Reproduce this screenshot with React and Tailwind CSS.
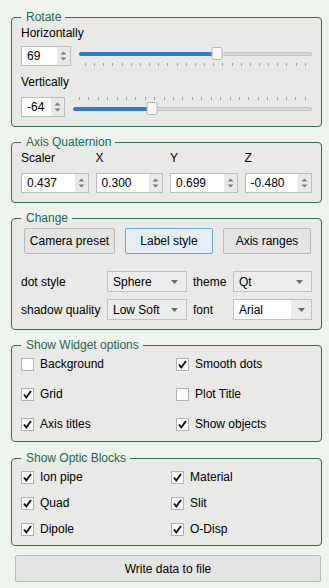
import React from 'react';

const Group = ({ title, className = '', children }) => (
  <fieldset
    className={`m-0 min-w-0 rounded-[4px] border border-[#376f4a] bg-[#e9eae7] px-[9px] ${className}`}
  >
    <legend className="pl-[5px] pr-[4px] text-[12px] leading-[14px] text-[#226a55]">{title}</legend>
    {children}
  </fieldset>
);

const Arrows = () => (
  <svg width="7" height="10" viewBox="0 0 7 10">
    <path d="M0.5 3.5 L3.5 0.5 L6.5 3.5 Z" fill="#7a7a7a" />
    <path d="M0.5 6.5 L3.5 9.5 L6.5 6.5 Z" fill="#7a7a7a" />
  </svg>
);

const SpinBox = ({ value, className = '' }) => (
  <div className={`flex h-[20px] border border-[#bcbcbc] bg-white ${className}`}>
    <div className="flex flex-1 items-center pl-[5px] leading-none">{value}</div>
    <div className="flex w-[13px] items-center justify-center bg-[#e9e9e9]">
      <Arrows />
    </div>
  </div>
);

const DownArrow = () => (
  <svg width="7" height="4" viewBox="0 0 7 4">
    <path d="M0 0 L7 0 L3.5 4 Z" fill="#6a6a6a" />
  </svg>
);

const Combo = ({ value, editable }) =>
  editable ? (
    <div className="flex h-[21px] border border-[#c2c2c2] bg-white">
      <div className="flex flex-1 items-center pl-[5px]">{value}</div>
      <div className="flex w-[20px] items-center justify-center bg-[#ebebeb]">
        <DownArrow />
      </div>
    </div>
  ) : (
    <div className="flex h-[21px] items-center justify-between border border-[#c2c2c2] bg-[#ececec] pl-[5px] pr-[8px]">
      <span>{value}</span>
      <DownArrow />
    </div>
  );

const Ticks = ({ className = '' }) => (
  <div className={`flex justify-between px-[6px] ${className}`}>
    {Array.from({ length: 25 }).map((_, i) => (
      <span key={i} className="h-[3px] w-px bg-[#a3a3a3]" />
    ))}
  </div>
);

const Slider = ({ pct, ticksBelow, className = '' }) => (
  <div className={`flex flex-1 flex-col ${className}`}>
    {!ticksBelow && <Ticks />}
    <div className={`relative h-[14px] ${ticksBelow ? '' : 'mt-[2px]'}`}>
      <div className="absolute left-0 right-0 top-[5px] h-[4px] rounded-[2px] border border-[#c4c4c4] bg-[#d8d8d8]" />
      <div
        className="absolute left-0 top-[5px] h-[4px] rounded-l-[2px] bg-[#2e7ad2]"
        style={{ width: `${pct}%` }}
      />
      <div
        className="absolute top-0 h-[13px] w-[11px] -translate-x-1/2 rounded-[2px] border border-[#b5b5b5] bg-[#f7f7f7]"
        style={{ left: `${pct}%` }}
      />
    </div>
    {ticksBelow && <Ticks className="mt-[2px]" />}
  </div>
);

const Check = ({ checked, label }) => (
  <div className="flex h-[14px] items-center">
    <div className="flex h-[13px] w-[13px] items-center justify-center border border-[#b3b3b3] bg-white">
      {checked && (
        <svg width="11" height="11" viewBox="0 0 11 11">
          <path d="M2 5.5 L4.3 8.5 L9 2" fill="none" stroke="#111" strokeWidth="1.9" />
        </svg>
      )}
    </div>
    <span className="ml-[6px]">{label}</span>
  </div>
);

const Button = ({ children, active, className = '' }) => (
  <button
    className={`h-[26px] rounded-[2px] border text-[12px] ${
      active ? 'border-[#6aa6e0] bg-[#e3eef9]' : 'border-[#b9b9b9] bg-[#e4e4e4]'
    } ${className}`}
  >
    {children}
  </button>
);

export default function App() {
  return (
    <div className="h-[588px] w-[329px] bg-[#eff3ed] pl-[11px] pr-[7px] pt-[10px] font-['Liberation_Sans',Arial,sans-serif] text-[12px] leading-[14px] text-black">
      <Group title="Rotate" className="pt-[2px] pb-[9px]">
        <div>Horizontally</div>
        <div className="mt-[6px] flex h-[20px] items-start">
          <SpinBox value="69" className="w-[50px]" />
          <Slider pct={59.2} ticksBelow className="ml-[8px] mt-[1px]" />
        </div>
        <div className="mt-[9px]">Vertically</div>
        <div className="mt-[8px] flex h-[20px] items-start">
          <SpinBox value="-64" className="w-[44px]" />
          <Slider pct={33} className="ml-[8px]" />
        </div>
      </Group>

      <Group title="Axis Quaternion" className="mt-[8px] pt-[2px] pb-[9px]">
        <div className="grid grid-cols-4 gap-x-[7px]">
          <div>Scaler</div>
          <div>X</div>
          <div>Y</div>
          <div>Z</div>
        </div>
        <div className="mt-[8px] grid grid-cols-4 gap-x-[7px]">
          <SpinBox value="0.437" />
          <SpinBox value="0.300" />
          <SpinBox value="0.699" />
          <SpinBox value="-0.480" />
        </div>
      </Group>

      <Group title="Change" className="mt-[8px] pt-[3px] pb-[9px]">
        <div className="flex gap-[10px] pl-[3px]">
          <Button className="w-[91px]">Camera preset</Button>
          <Button active className="w-[88px]">Label style</Button>
          <Button className="w-[88px]">Axis ranges</Button>
        </div>
        <div className="mt-[17px] flex items-center">
          <span className="w-[86px]">dot style</span>
          <div className="w-[80px]">
            <Combo value="Sphere" />
          </div>
          <span className="ml-[6px] w-[40px]">theme</span>
          <div className="w-[79px]">
            <Combo value="Qt" />
          </div>
        </div>
        <div className="mt-[7px] flex items-center">
          <span className="w-[86px]">shadow quality</span>
          <div className="w-[80px]">
            <Combo value="Low Soft" />
          </div>
          <span className="ml-[6px] w-[40px]">font</span>
          <div className="w-[79px]">
            <Combo value="Arial" editable />
          </div>
        </div>
      </Group>

      <Group title="Show Widget options" className="mt-[8px] pt-[5px] pb-[10px]">
        <div className="grid grid-cols-[155px_1fr] gap-y-[16px]">
          <Check label="Background" />
          <Check checked label="Smooth dots" />
          <Check checked label="Grid" />
          <Check label="Plot Title" />
          <Check checked label="Axis titles" />
          <Check checked label="Show objects" />
        </div>
      </Group>

      <Group title="Show Optic Blocks" className="mt-[9px] pt-[5px] pb-[9px]">
        <div className="grid grid-cols-[150px_1fr] gap-y-[12px]">
          <Check checked label="Ion pipe" />
          <Check checked label="Material" />
          <Check checked label="Quad" />
          <Check checked label="Slit" />
          <Check checked label="Dipole" />
          <Check checked label="O-Disp" />
        </div>
      </Group>

      <button className="mt-[9px] ml-[4px] h-[27px] w-[306px] rounded-[2px] border border-[#b9b9b9] bg-[#e5e5e5] text-[12px]">
        Write data to file
      </button>
    </div>
  );
}
